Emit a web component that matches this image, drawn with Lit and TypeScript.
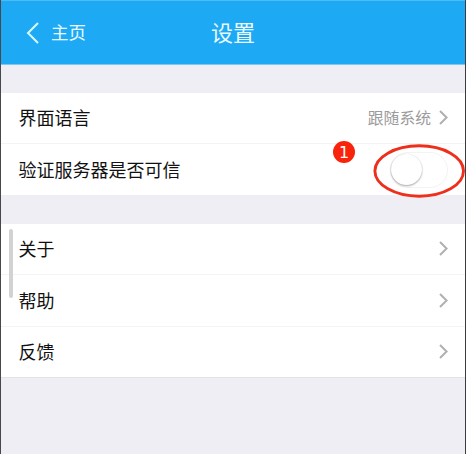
import { LitElement, html, css, nothing } from "lit";
import { customElement, property } from "lit/decorators.js";

@customElement("settings-row")
class SettingsRow extends LitElement {
  @property() label = "";
  @property() value = "";
  @property({ type: Boolean }) toggle = false;

  static styles = css`
    :host {
      display: flex;
      align-items: center;
      box-sizing: border-box;
      padding: 0 17px 0 17.5px;
      background: #fff;
      position: relative;
    }
    .label {
      flex: 1;
      font-size: 18px;
      line-height: 26px;
      padding-bottom: 2px;
      color: #111;
    }
    .value {
      font-size: 15.8px;
      line-height: 24px;
      color: #9b9b9b;
      margin-right: 8px;
    }
    .chevron {
      display: block;
      margin-bottom: 1px;
    }
    .switch {
      box-sizing: border-box;
      width: 58px;
      height: 36px;
      padding-top: 1px;
      margin-top: 1px;
      border: 1px solid #f3f3f3;
      border-radius: 18px;
      background: #fff;
    }
    .knob {
      width: 31px;
      height: 31px;
      border-radius: 50%;
      background: #fff;
      box-shadow: 0 1px 2px rgba(0, 0, 0, 0.34), 0 0 1px rgba(0, 0, 0, 0.12);
    }
    .ring {
      position: absolute;
      right: 0;
      top: 0;
      overflow: visible;
    }
    .badge {
      position: absolute;
      left: 332px;
      top: -3px;
      width: 22px;
      height: 22px;
      border-radius: 50%;
      background: #f9220a;
      color: #fff;
      font: 16px/23px "DejaVu Sans", sans-serif;
      text-align: center;
    }
  `;

  render() {
    return html`
      <span class="label">${this.label}</span>
      ${this.value ? html`<span class="value">${this.value}</span>` : nothing}
      ${this.toggle
        ? html`<div class="switch"><div class="knob"></div></div>
            <svg class="ring" width="92" height="54" viewBox="0 0 92 54">
              <ellipse cx="46.2" cy="27" rx="44.3" ry="25.2" fill="none" stroke="#ee2f1c" stroke-width="2.9" />
            </svg>
            <span class="badge">1</span>`
        : html`<svg class="chevron" width="9" height="15" viewBox="0 0 9 15">
            <path d="M1 1 L7.6 7.5 L1 14" fill="none" stroke="#b0b0b0" stroke-width="2" />
          </svg>`}
    `;
  }
}

@customElement("app-root")
class AppRoot extends LitElement {
  static styles = css`
    :host {
      display: block;
      box-sizing: border-box;
      height: 454px;
      overflow: hidden;
      position: relative;
      border-left: 1px solid #48484c;
      border-right: 1px solid #3c3c40;
      background: #efeef4;
      font-family: "Noto Sans CJK SC", sans-serif;
    }
    .header {
      box-sizing: border-box;
      height: 65px;
      display: grid;
      grid-template-columns: 1fr auto 1fr;
      align-items: center;
      padding: 1px 0 0 25px;
      border-top: 1px solid #4dbcf5;
      border-bottom: 1px solid #79c9f2;
      background: #1ea9f5;
      color: #e9fbff;
    }
    .back {
      display: flex;
      align-items: center;
      gap: 12px;
      font-size: 17.5px;
      line-height: 26px;
    }
    .back span {
      padding-bottom: 2px;
    }
    .title {
      font-size: 22px;
      line-height: 32px;
      margin-left: -25px;
      padding-bottom: 4px;
    }
    .group {
      margin-top: 28px;
      display: grid;
    }
    .group.first {
      grid-template-rows: 51px 51px;
    }
    .group.second {
      margin-top: 29px;
      grid-template-rows: 51px 52px 50px;
      border-bottom: 1px solid #e2e2e6;
    }
    .line {
      border-bottom: 1px solid #f4f4f6;
    }
    .scroll {
      position: absolute;
      left: 8px;
      top: 229px;
      width: 4px;
      height: 69px;
      border-radius: 2px;
      background: #d2d2d2;
    }
  `;

  render() {
    return html`
      <div class="header">
        <div class="back">
          <svg width="13" height="22" viewBox="0 0 13 22">
            <path d="M12 1 L2 11 L12 21" fill="none" stroke="#d9f7ff" stroke-width="2" />
          </svg>
          <span>主页</span>
        </div>
        <div class="title">设置</div>
      </div>
      <div class="group first">
        <settings-row class="line" label="界面语言" value="跟随系统"></settings-row>
        <settings-row label="验证服务器是否可信" toggle></settings-row>
      </div>
      <div class="group second">
        <settings-row class="line" label="关于"></settings-row>
        <settings-row class="line" label="帮助"></settings-row>
        <settings-row label="反馈"></settings-row>
      </div>
      <div class="scroll"></div>
    `;
  }
}
